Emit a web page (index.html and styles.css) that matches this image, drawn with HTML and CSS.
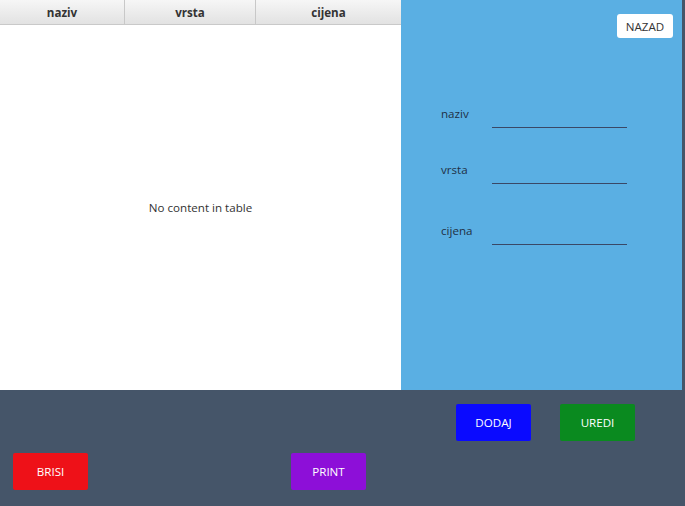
FILE: index.html
```html
<!DOCTYPE html>
<html>
<head>
<meta charset="utf-8">
<link rel="stylesheet" href="styles.css">
</head>
<body>
<div class="app">
  <div class="top">
    <div class="table">
      <div class="thead">
        <div class="th c1">naziv</div>
        <div class="th c2">vrsta</div>
        <div class="th c3">cijena</div>
      </div>
      <div class="tbody">No content in table</div>
    </div>
    <div class="side">
      <div class="side-top"><button class="nazad">NAZAD</button></div>
      <div class="form">
        <div class="row r1"><span class="lbl">naziv</span><div class="field"></div></div>
        <div class="row r2"><span class="lbl">vrsta</span><div class="field"></div></div>
        <div class="row r3"><span class="lbl">cijena</span><div class="field"></div></div>
      </div>
    </div>
  </div>
  <div class="bottom">
    <div class="brow brow1">
      <button class="btn dodaj">DODAJ</button>
      <button class="btn uredi">UREDI</button>
    </div>
    <div class="brow brow2">
      <button class="btn brisi">BRISI</button>
      <button class="btn print">PRINT</button>
    </div>
  </div>
</div>
</body>
</html>
```
FILE: styles.css
```css
* { box-sizing: border-box; }
html, body { margin: 0; padding: 0; }
body {
  width: 685px;
  height: 506px;
  background: #455569;
  font-family: "Open Sans", "Noto Sans", sans-serif;
  font-size: 11.6px;
  overflow: hidden;
}
.app { display: flex; flex-direction: column; width: 685px; height: 506px; }
.top { display: flex; height: 390px; }
.table { width: 401px; background: #ffffff; display: flex; flex-direction: column; }
.thead {
  display: flex;
  height: 25px;
  background: linear-gradient(#f6f6f6, #e2e2e2);
  border-bottom: 1px solid #c9c9c9;
}
.th {
  display: flex;
  align-items: center;
  justify-content: center;
  font-weight: bold;
  color: #333;
  border-right: 1px solid #c8c8c8;
  font-size: 11.6px;
}
.c1 { width: 125px; }
.c2 { width: 131px; }
.c3 { flex: 1; border-right: none; }
.tbody {
  flex: 1;
  display: flex;
  align-items: center;
  justify-content: center;
  color: #333;
  padding-bottom: 1px;
}
.side { width: 281px; background: #5aafe3; display: flex; flex-direction: column; }
.side-top { display: flex; justify-content: flex-end; padding: 14px 9px 0 0; }
.nazad {
  width: 56px;
  height: 24px;
  border: none;
  border-radius: 3px;
  background: #ffffff;
  color: #333;
  font-family: inherit;
  font-size: 11.6px;
  padding: 0;
}
.form { padding-left: 40px; display: flex; flex-direction: column; }
.row { display: grid; grid-template-columns: 51px 135px; height: 22px; }
.r1 { margin-top: 68px; }
.r2 { margin-top: 34px; }
.r3 { margin-top: 39px; }
.lbl { color: #1f2f45; line-height: 16px; }
.field { border-bottom: 1px solid #3a4866; height: 22px; }
.bottom { flex: 1; display: flex; flex-direction: column; }
.brow { display: flex; }
.brow1 { padding: 14px 0 0 456px; gap: 29px; }
.brow2 { padding: 12px 0 0 13px; gap: 203px; }
.btn {
  width: 75px;
  height: 37px;
  border: none;
  border-radius: 2px;
  color: #ffffff;
  font-family: inherit;
  font-size: 11.6px;
  padding: 0;
}
.dodaj { background: #0a0aff; }
.uredi { background: #0a8a1f; }
.brisi { background: #ee1118; }
.print { background: #8d0fd8; }
```
